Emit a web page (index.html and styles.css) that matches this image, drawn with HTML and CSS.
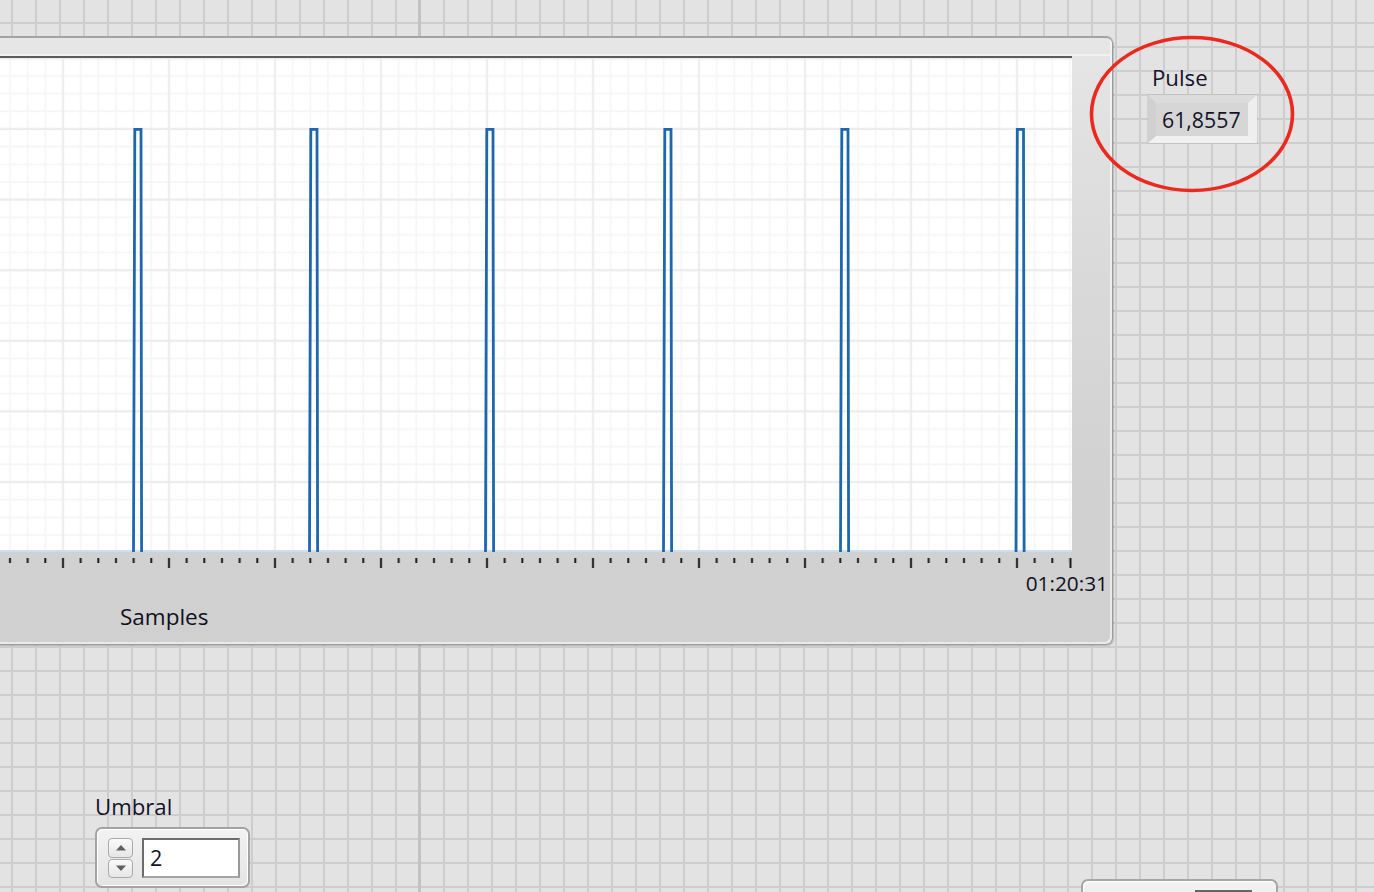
FILE: index.html
```html
<!DOCTYPE html>
<html lang="es">
<head>
<meta charset="utf-8">
<title>Pulse</title>
<link rel="stylesheet" href="styles.css">
</head>
<body>
<main class="panel">
  <section class="chart">
    <div class="chart-top"></div>
    <div class="plot">
      <svg class="plot-svg" viewBox="-40 0 1112 494" width="1112" height="494">
        <defs>
          <pattern id="pgrid" patternUnits="userSpaceOnUse" x="1.167" y="62.175" width="106" height="70.6">
            <rect width="106" height="70.6" fill="#ffffff"/>
            <g stroke="#f5f5f5" stroke-width="1.5">
              <line x1="8.833" y1="0" x2="8.833" y2="70.6"/>
              <line x1="26.5" y1="0" x2="26.5" y2="70.6"/>
              <line x1="44.167" y1="0" x2="44.167" y2="70.6"/>
              <line x1="79.5" y1="0" x2="79.5" y2="70.6"/>
              <line x1="97.167" y1="0" x2="97.167" y2="70.6"/>
              <line x1="0" y1="26.475" x2="106" y2="26.475"/>
              <line x1="0" y1="44.125" x2="106" y2="44.125"/>
              <line x1="0" y1="61.775" x2="106" y2="61.775"/>
            </g>
            <g stroke="#ececec" stroke-width="2">
              <line x1="61.833" y1="0" x2="61.833" y2="70.6"/>
              <line x1="0" y1="8.825" x2="106" y2="8.825"/>
            </g>
          </pattern>
        </defs>
        <rect x="-40" y="0" width="1112" height="494" fill="url(#pgrid)"/>
        <line x1="-40" y1="493" x2="1072" y2="493" stroke="#cadff0" stroke-width="2"/>
        <g fill="none" stroke="#1d68ad" stroke-width="2.8" stroke-linejoin="miter">
          <path d="M133.5 494 L134.8 71.3 L141 71.3 L141.6 494"/>
          <path d="M309.5 494 L310.8 71.3 L317 71.3 L317.6 494"/>
          <path d="M485.5 494 L486.8 71.3 L493 71.3 L493.6 494"/>
          <path d="M663.5 494 L664.8 71.3 L671 71.3 L671.6 494"/>
          <path d="M840.5 494 L841.8 71.3 L848 71.3 L848.6 494"/>
          <path d="M1016 494 L1017.3 71.3 L1023.5 71.3 L1024.1 494"/>
        </g>
      </svg>
    </div>
    <div class="ticks">
      <svg viewBox="-40 0 1112 16" width="1112" height="16">
        <defs>
          <pattern id="tks" patternUnits="userSpaceOnUse" x="1.167" y="0" width="106" height="16">
            <g fill="#1b1b1b">
              <rect x="7.833" y="6" width="2" height="5"/>
              <rect x="25.5" y="6" width="2" height="5"/>
              <rect x="43.167" y="6" width="2" height="5"/>
              <rect x="60.833" y="6" width="2" height="10"/>
              <rect x="78.5" y="6" width="2" height="5"/>
              <rect x="96.167" y="6" width="2" height="5"/>
            </g>
          </pattern>
        </defs>
        <rect x="-40" y="0" width="1109" height="16" fill="url(#tks)"/>
        <rect x="1069.5" y="6" width="2" height="10" fill="#1b1b1b"/>
      </svg>
    </div>
    <div class="time">01:20:31</div>
    <div class="xlabel">Samples</div>
  </section>

  <div class="ctl pulse">
    <div class="label">Pulse</div>
    <div class="indicator">61,8557</div>
  </div>

  <svg class="mark" viewBox="0 0 210 160" width="210" height="160">
    <ellipse cx="104" cy="80" rx="100.5" ry="76.5" fill="none" stroke="#ea2a1f" stroke-width="3.6"/>
  </svg>

  <div class="ctl umbral">
    <div class="label">Umbral</div>
    <div class="numctl">
      <div class="spin">
        <div class="spin-btn">
          <svg viewBox="0 0 12 7" width="12" height="7"><path d="M1 6.5 L6 1 L11 6.5 Z" fill="#5f5f5f"/></svg>
        </div>
        <div class="spin-btn">
          <svg viewBox="0 0 12 7" width="12" height="7"><path d="M1 0.5 L6 6 L11 0.5 Z" fill="#5f5f5f"/></svg>
        </div>
      </div>
      <div class="field">2</div>
    </div>
  </div>

  <div class="ctl partial">
    <div class="pfield"></div>
  </div>
</main>
</body>
</html>
```

FILE: styles.css
```css
html, body {
  margin: 0;
  padding: 0;
}

body {
  width: 1374px;
  height: 892px;
  overflow: hidden;
  background-color: #e3e3e3;
  background-image:
    linear-gradient(90deg, transparent 418px, #c2c2c2 418px, #c2c2c2 421px, transparent 421px),
    linear-gradient(90deg, #cdcdcd 2px, transparent 2px),
    linear-gradient(180deg, #cdcdcd 2px, transparent 2px);
  background-size: 100% 100%, 24px 24px, 24px 24px;
  background-position: 0 0, 11px 0, 0 22px;
  background-repeat: no-repeat, repeat, repeat;
  font-family: "Open Sans", "Noto Sans", "DejaVu Sans", sans-serif;
  color: #141414;
}

.panel {
  position: relative;
  width: 1374px;
  height: 892px;
}

/* ---------- waveform chart ---------- */
.chart {
  position: absolute;
  left: -40px;
  top: 36px;
  width: 1153px;
  height: 609px;
  box-sizing: border-box;
  display: flex;
  flex-direction: column;
  border: 1px solid #9d9d9d;
  border-top: 2px solid #a3a3a3;
  border-left: none;
  border-radius: 0 7px 7px 0;
  background: linear-gradient(180deg, #e6e6e6 0%, #dcdcdc 30%, #d2d2d2 70%, #d0d0d0 100%);
  box-shadow: inset -2px -2px 0 rgba(255, 255, 255, 0.55), 1px 1px 1px rgba(0, 0, 0, 0.18);
}

.chart-top {
  height: 16px;
  border-bottom: 2px solid #f1f1f1;
  flex: none;
}

.plot {
  width: 1112px;
  height: 494px;
  border-top: 2px solid #5b5b5b;
  flex: none;
  background: #fff;
}

.plot-svg {
  display: block;
}

.ticks {
  width: 1112px;
  height: 16px;
  flex: none;
}

.ticks svg {
  display: block;
}

.time {
  height: 30px;
  line-height: 30px;
  text-align: right;
  padding-right: 4px;
  font-size: 20.8px;
  flex: none;
  color: #101020;
}

.xlabel {
  margin-top: 8px;
  line-height: 22px;
  padding-left: 160px;
  font-size: 22.5px;
  flex: none;
  color: #101020;
}

/* ---------- front panel controls ---------- */
.ctl {
  position: absolute;
  display: flex;
  flex-direction: column;
  align-items: flex-start;
}

.label {
  font-size: 22.2px;
  line-height: 24px;
  color: #15132a;
}

.pulse {
  left: 1148px;
  top: 66px;
}

.pulse .label {
  padding-left: 4px;
}

.indicator {
  margin-top: 5px;
  width: 86px;
  height: 33px;
  line-height: 33px;
  border-style: solid;
  border-width: 8px 9px 7px 8px;
  border-color: #dcdcdc #eeeeee #f1f1f1 #d0d0d0;
  background: #d6d6d6;
  padding-left: 6px;
  box-sizing: content-box;
  font-size: 21.3px;
  color: #141428;
  box-shadow: 0 0 0 1px rgba(170, 170, 170, 0.3);
}

.mark {
  position: absolute;
  left: 1088px;
  top: 34px;
}

.umbral {
  left: 95px;
  top: 795px;
}

.numctl {
  margin-top: 8px;
  border: 2px solid #a3a3a3;
  border-radius: 7px;
  background: linear-gradient(180deg, #f2f2f2 0%, #e4e4e4 100%);
  box-shadow: inset 1px 1px 0 #ffffff, inset -1px -1px 0 #ffffff;
  display: flex;
  gap: 9px;
  padding: 9px 0 0 11px;
  box-sizing: border-box;
  width: 155px;
  height: 61px;
}

.spin {
  width: 25px;
  height: 40px;
  display: flex;
  flex-direction: column;
  gap: 1px;
}

.spin-btn {
  flex: 1;
  border: 1px solid #aaaaaa;
  border-radius: 4px;
  background: linear-gradient(180deg, #fafafa, #e6e6e6);
  display: flex;
  align-items: center;
  justify-content: center;
}

.spin-btn svg {
  display: block;
}

.field {
  width: 98px;
  height: 40px;
  box-sizing: border-box;
  border: 2px solid #6c6c6c;
  border-right-color: #9a9a9a;
  border-bottom-color: #a5a5a5;
  background: #ffffff;
  padding-left: 6px;
  font-size: 21.5px;
  line-height: 36px;
  color: #141428;
}

.partial {
  left: 1081px;
  top: 879px;
  width: 197px;
  height: 40px;
  box-sizing: border-box;
  border: 2px solid #a6a6a6;
  border-radius: 7px;
  background: linear-gradient(180deg, #f3f3f3, #e6e6e6);
  box-shadow: inset 1px 1px 0 #ffffff;
  padding: 9px 0 0 112px;
}

.pfield {
  width: 57px;
  height: 30px;
  box-sizing: border-box;
  border: 2px solid #666666;
  background: #ffffff;
}
```
